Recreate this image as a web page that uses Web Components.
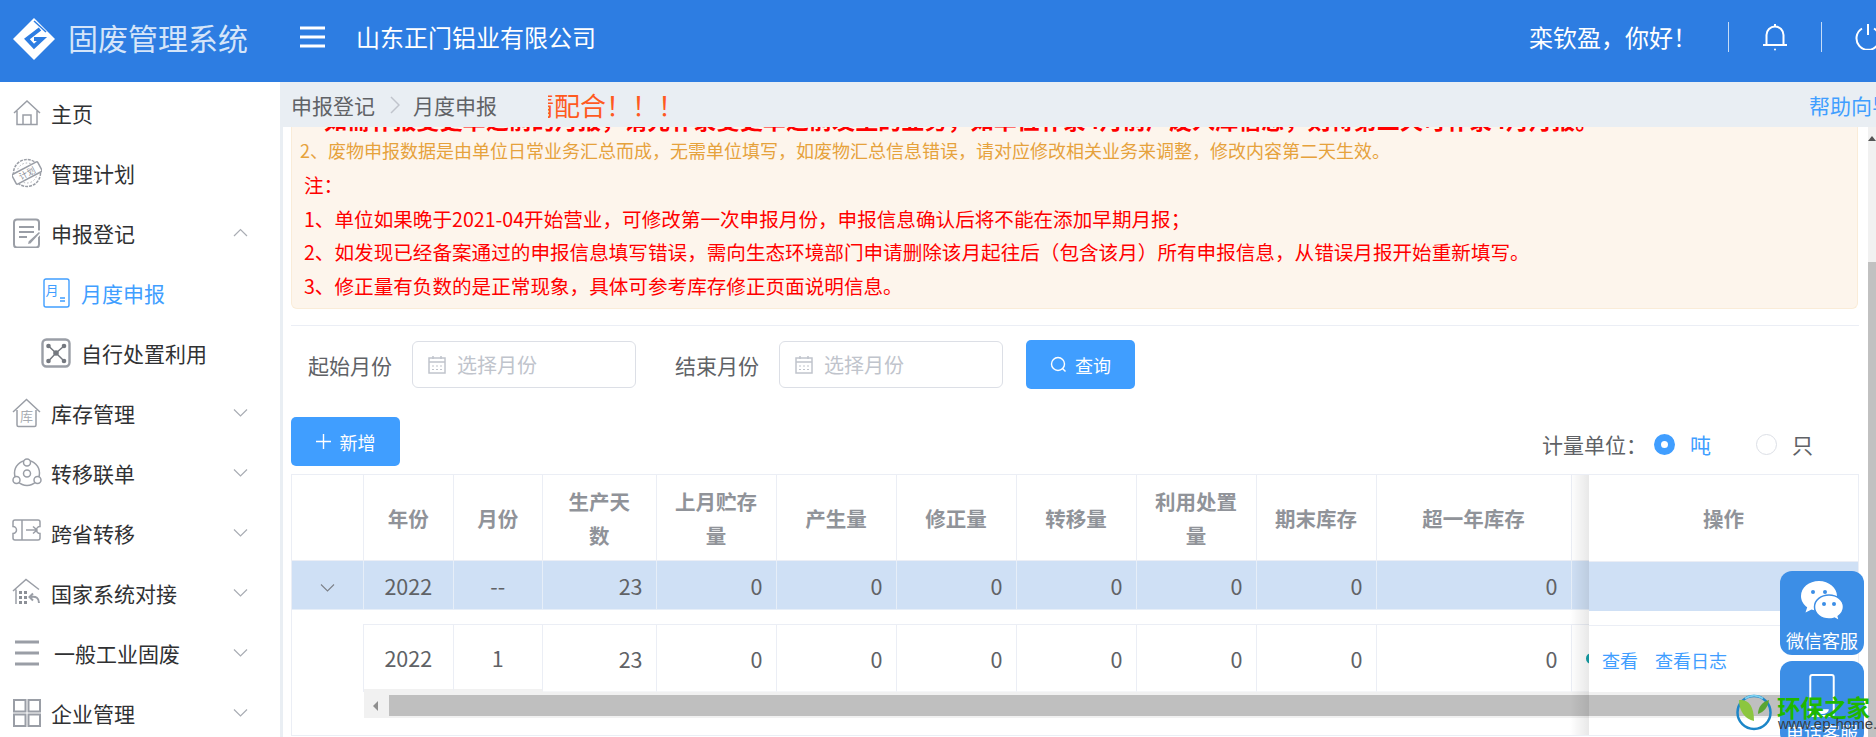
<!DOCTYPE html>
<html lang="zh-CN">
<head>
<meta charset="utf-8">
<title>固废管理系统</title>
<style>
  html, body { margin: 0; height: 100%; overflow: hidden; background: #fff; }
  body {
    display: flex;
    flex-direction: column;
    position: relative;
    font-family: "Noto Sans CJK SC", "Liberation Sans", sans-serif;
  }
  .layout { flex: 1; display: flex; min-height: 0; }
</style>
</head>
<body>
  <app-header company="山东正门铝业有限公司" greeting="栾钦盈，你好！"></app-header>
  <div class="layout">
    <side-nav>
      <nav-item icon="home">主页</nav-item>
      <nav-item icon="stamp">管理计划</nav-item>
      <nav-item icon="doc" arrow="up">申报登记</nav-item>
      <nav-item icon="month" sub active>月度申报</nav-item>
      <nav-item icon="network" sub>自行处置利用</nav-item>
      <nav-item icon="store" arrow="down">库存管理</nav-item>
      <nav-item icon="circles" arrow="down">转移联单</nav-item>
      <nav-item icon="ticket" arrow="down">跨省转移</nav-item>
      <nav-item icon="gov" arrow="down">国家系统对接</nav-item>
      <nav-item icon="bars" arrow="down" shift>一般工业固废</nav-item>
      <nav-item icon="grid" arrow="down">企业管理</nav-item>
    </side-nav>
    <main-panel>
      <notice-box></notice-box>
      <filter-bar></filter-bar>
      <table-tools></table-tools>
      <report-table></report-table>
    </main-panel>
  </div>
  <float-service></float-service>
  <ep-mark></ep-mark>

<script>
// sidebar icons, all on a 30 box
const ICONS = {
  home: `<path d="M2 15 15 3l13 12M5 13v13.500h20V13M11 26.500V17h8v9.500"/>`,
  stamp: `<circle cx="15" cy="15" r="13.500" stroke-dasharray="3 1"/><circle cx="15" cy="15" r="10" stroke-width=".8" stroke-dasharray="1.500 2"/>
    <g transform="rotate(-28 15 15)"><rect x="0.500" y="9.500" width="29" height="11" rx="1.500" fill="#fff"/>
    <text x="15" y="18.500" font-size="8.500" text-anchor="middle" fill="#8c9097" stroke="none">计划</text></g>`,
  doc: `<rect x="2" y="1.500" width="25" height="28" rx="3" stroke-width="2"/><path d="M7 9h15M7 14h15M7 19h8" stroke-width="2"/><path d="M15 27l1-4 11-10 2 2-10 11z" fill="#9a9ea6" stroke="#fff"/>`,
  month: `<rect x="3" y="1" width="25" height="28" rx="2" stroke="#409eff" stroke-width="1.400"/>
    <text x="11" y="17" font-size="13" text-anchor="middle" fill="#409eff" stroke="none">月</text>
    <path d="M19 20h5M19 23h5" stroke="#409eff"/>`,
  network: `<rect x="1.500" y="1.500" width="27" height="27" rx="4" stroke-width="2.400"/>
    <path d="M7.500 8 15 15 23 8M7.500 23 15 15 23 23" stroke="#74787f" stroke-width="1.500"/>
    <g fill="#74787f" stroke="none"><circle cx="7.500" cy="8" r="2.300"/><circle cx="23" cy="8" r="2.300"/><circle cx="7.500" cy="23" r="2.300"/><circle cx="23" cy="23" r="2.300"/><circle cx="15" cy="15" r="2.800"/></g>`,
  store: `<path d="M1 14 14.500 1.500 28 14M5 12v15a1.500 1.500 0 0 0 1.500 1.500h16a1.500 1.500 0 0 0 1.500-1.500V12"/>
    <text x="14.500" y="23" font-size="13" text-anchor="middle" fill="#a8acb2" stroke="none">库</text>`,
  circles: `<circle cx="15" cy="15" r="12.500"/><circle cx="15" cy="15.500" r="3.500"/>
    <g fill="#fff"><circle cx="15" cy="4.500" r="3.500"/><circle cx="4.500" cy="22" r="3.500"/><circle cx="25.500" cy="22" r="3.500"/></g>`,
  ticket: `<path d="M3 2h23a2 2 0 0 1 2 2v4.500a3.500 3.500 0 0 0 0 7V20a2 2 0 0 1-2 2H3a2 2 0 0 1-2-2v-4.500a3.500 3.500 0 0 0 0-7V4a2 2 0 0 1 2-2zM10 2v20M14 12h11M21 8.500l4 3.500-4 3.500"/>`,
  gov: `<path d="M1 13 14 1.500l13 10M4 26V11.500"/>
    <g fill="#8c9097" stroke="none"><rect x="7" y="13" width="3" height="3"/><rect x="12" y="13" width="3" height="3"/><rect x="7" y="18" width="3" height="3"/><rect x="12" y="18" width="3" height="3"/><rect x="7" y="23" width="3" height="3"/><rect x="12" y="23" width="3" height="3"/></g>
    <path d="M27 25c0-5-3-7-8-6M21 15.500l-3.500 3.500 3.500 3.500" stroke-width="2"/>`,
  bars: `<path d="M3 4h24M3 15h24M3 26h24" stroke-width="3"/>`,
  grid: `<g stroke-width="2"><rect x="2" y="2" width="11.500" height="11.500"/><rect x="16.500" y="2" width="11.500" height="11.500"/><rect x="2" y="16.500" width="11.500" height="11.500"/><rect x="16.500" y="16.500" width="11.500" height="11.500"/></g>`
};

class AppHeader extends HTMLElement {
  constructor() {
    super();
    this.attachShadow({ mode: 'open' });
  }

  connectedCallback() {
    const company = this.getAttribute('company') || '';
    const greeting = this.getAttribute('greeting') || '';
    this.shadowRoot.innerHTML = `
      <style>
        :host { display: flex; align-items: center; height: 82px; flex: none; background: #2d7de2; color: #fff; overflow: hidden; }
        svg { display: block; flex: none; }
        .logo { margin: -5px 0 0 13px; }
        .title { margin: -8px 0 0 13px; width: 180px; font-size: 30px; line-height: 40px; color: #d5e5f9; white-space: nowrap; }
        .menu { margin: -8px 0 0 52px; }
        .company { margin: -8px 0 0 31px; font-size: 24px; line-height: 34px; white-space: nowrap; }
        .right { margin-left: auto; display: flex; align-items: center; height: 30px; margin-top: -8px; }
        .hello { font-size: 24px; line-height: 34px; white-space: nowrap; margin-right: 31px; margin-top: -1px; }
        .sep { width: 1px; height: 30px; background: #c5dcf7; }
        .bell { margin: 0 33px 0 33px; }
        .power { margin: 0 -5px 0 33px; }
      </style>
      <svg class="logo" width="42" height="42" viewBox="0 0 42 42">
        <path d="M21 0 42 21 21 42 0 21z" fill="#fff"/>
        <path d="M27 11 14 21 21 28.500 29 21H21" fill="none" stroke="#2d7de2" stroke-width="4"/>
        <path d="M21 3 33 14" stroke="#2d7de2" stroke-width="1.500"/>
      </svg>
      <div class="title">固废管理系统</div>
      <svg class="menu" width="25" height="22" viewBox="0 0 25 22"><path d="M0 2h25M0 11h25M0 20h25" stroke="#fff" stroke-width="3"/></svg>
      <div class="company">${company}</div>
      <div class="right">
        <div class="hello">${greeting}</div>
        <div class="sep"></div>
        <svg class="bell" width="26" height="28" viewBox="0 0 26 28" fill="none" stroke="#fff" stroke-width="2">
          <path d="M1 22h24M4.500 22V12a8.500 8.500 0 0 1 17 0v10M13 3V1"/><circle cx="13" cy="26.500" r="1" fill="#fff" stroke="none"/>
        </svg>
        <div class="sep"></div>
        <svg class="power" width="26" height="26" viewBox="0 0 26 26" fill="none" stroke="#fff" stroke-width="2">
          <path d="M7 4.500a11.500 11.500 0 1 0 12 0M13 0v11"/>
        </svg>
      </div>`;
  }
}

class SideNav extends HTMLElement {
  constructor() {
    super();
    this.attachShadow({ mode: 'open' });
    this.shadowRoot.innerHTML = `
      <style>
        :host { display: block; width: 280px; flex: none; padding-top: 1px; background: #fff; overflow: hidden; box-sizing: border-box; }
      </style>
      <slot></slot>`;
  }
}

class NavItem extends HTMLElement {
  constructor() {
    super();
    this.attachShadow({ mode: 'open' });
  }

  connectedCallback() {
    const arrow = this.getAttribute('arrow');
    const chevron = arrow === 'up' ? 'M1 8 7.500 1.500 14 8' : 'M1 1.500 7.500 8 14 1.500';
    this.shadowRoot.innerHTML = `
      <style>
        :host { display: flex; align-items: center; height: 60px; padding: 0 32px 0 12px; box-sizing: border-box; font-size: 21px; color: #303133; white-space: nowrap; }
        :host([sub]) { padding-left: 41px; }
        :host([active]) { color: #409eff; }
        :host([shift]) .label { margin-left: 3px; }
        .icon { width: 30px; height: 30px; flex: none; margin-right: 9px; fill: none; stroke: #9a9ea6; stroke-width: 1.500; }
        :host([sub]) .icon { margin-right: 10px; }
        text { font-family: "Noto Sans CJK SC", sans-serif; }
        .arrow { margin: -1px 0 0 auto; fill: none; stroke: #a9adb4; stroke-width: 1.200; }
      </style>
      <svg class="icon" viewBox="0 0 30 30">${ICONS[this.getAttribute('icon')] || ''}</svg>
      <span class="label"><slot></slot></span>
      ${arrow ? `<svg class="arrow" width="15" height="10" viewBox="0 0 15 10"><path d="${chevron}"/></svg>` : ''}`;
  }
}

class MainPanel extends HTMLElement {
  constructor() {
    super();
    this.attachShadow({ mode: 'open' });
    this.shadowRoot.innerHTML = `
      <style>
        :host { display: flex; flex-direction: column; flex: 1; min-width: 0; background: #e9eef3; }
        .crumbs { height: 45px; flex: none; display: flex; align-items: center; background: #e9eef3; font-size: 21px; color: #606266; white-space: nowrap; position: relative; z-index: 1; }
        .first { margin-left: 11px; }
        .gt { margin: 0 13px 0 15px; fill: none; stroke: #c0c4cc; stroke-width: 1.500; }
        .ticker { margin-left: 51px; width: 124px; overflow: hidden; color: #ff5a1f; font-size: 26px; line-height: 36px; }
        .ticker span { display: block; margin-left: -20px; }
        .help { margin-left: auto; margin-right: -17px; color: #409eff; }
        .body { flex: 1; min-height: 0; display: flex; background: #fff; margin-left: 3px; }
        .page { flex: 1; min-width: 0; padding: 0 9px 0 8px; overflow: hidden; }
        .bar { width: 8px; flex: none; display: flex; flex-direction: column; background: #f1f1f1; }
        .bar i { display: block; width: 0; height: 0; margin: 9px 0 0 0; border: 4px solid transparent; border-top: 0; border-bottom: 5px solid #555; }
        .bar b { display: block; margin-top: 121px; flex: 1; background: #c1c1c1; }
      </style>
      <div class="crumbs">
        <span class="first">申报登记</span>
        <svg class="gt" width="10" height="18" viewBox="0 0 10 18"><path d="M1 1l8 8-8 8"/></svg>
        <span>月度申报</span>
        <div class="ticker"><span>请配合！！！</span></div>
        <span class="help">帮助向导</span>
      </div>
      <div class="body">
        <div class="page"><slot></slot></div>
        <div class="bar"><i></i><b></b></div>
      </div>`;
  }
}

class NoticeBox extends HTMLElement {
  constructor() {
    super();
    this.attachShadow({ mode: 'open' });
    this.shadowRoot.innerHTML = `
      <style>
        :host { display: block; margin: -23px 1px 0 0; padding: 0 8px 6px; background: #fdf5ec; border: 1px solid #faecd8; border-top: 0; border-radius: 0 0 6px 6px; font-size: 18px; white-space: nowrap; }
        p { margin: 0; }
        .top { height: 30px; line-height: 30px; padding-left: 24px; font-size: 23.100px; font-weight: 700; color: #f00; }
        .warn { height: 32px; line-height: 32px; color: #e6a23c; margin-bottom: 2px; }
        .red { height: 33.500px; line-height: 33.500px; padding-left: 4px; font-size: 19.600px; color: #f00; }
      </style>
      <p class="top">如需补报变更单之前的月报，请先补录变更单之前发生的业务，如单位补录4月前产废入库信息，则待第二天可补录4月月报。</p>
      <p class="warn">2、废物申报数据是由单位日常业务汇总而成，无需单位填写，如废物汇总信息错误，请对应修改相关业务来调整，修改内容第二天生效。</p>
      <p class="red">注：</p>
      <p class="red">1、单位如果晚于2021-04开始营业，可修改第一次申报月份，申报信息确认后将不能在添加早期月报；</p>
      <p class="red">2、如发现已经备案通过的申报信息填写错误，需向生态环境部门申请删除该月起往后（包含该月）所有申报信息，从错误月报开始重新填写。</p>
      <p class="red">3、修正量有负数的是正常现象，具体可参考库存修正页面说明信息。</p>`;
  }
}

class FilterBar extends HTMLElement {
  constructor() {
    super();
    this.attachShadow({ mode: 'open' });
    const field = label => `
      <span class="lbl">${label}</span>
      <div class="input">
        <svg width="18" height="18" viewBox="0 0 18 18" fill="none" stroke="#c0c4cc" stroke-width="1.500">
          <rect x="1" y="2" width="16" height="15"/><path d="M1 6h16M5 0v3M13 0v3"/>
          <path d="M4 10h2M8 10h2M12 10h2M4 13.500h2M8 13.500h2M12 13.500h2" stroke-width="1.200"/>
        </svg>
        <span>选择月份</span>
      </div>`;
    this.shadowRoot.innerHTML = `
      <style>
        :host { display: flex; align-items: center; margin-top: 16px; padding: 14px 0 0 17px; border-top: 1px solid #ebeef5; height: 49px; font-size: 20px; color: #606266; white-space: nowrap; }
        .lbl { width: 84px; font-size: 21px; margin-right: 20px; }
        .input { width: 224px; height: 47px; box-sizing: border-box; margin-right: 39px; display: flex; align-items: center; gap: 11px; padding-left: 15px; border: 1px solid #dcdfe6; border-radius: 6px; color: #c0c4cc; }
        .btn { width: 109px; height: 49px; margin-left: -16px; display: flex; align-items: center; justify-content: center; gap: 8px; background: #409eff; border-radius: 5px; color: #fff; font-size: 18px; }
      </style>
      ${field('起始月份')}${field('结束月份')}
      <div class="btn">
        <svg width="17" height="17" viewBox="0 0 17 17" fill="none" stroke="#fff" stroke-width="1.400"><circle cx="8" cy="8" r="6.500"/><path d="M12.500 12.500 15.500 15.500"/></svg>
        <span>查询</span>
      </div>`;
  }
}

class TableTools extends HTMLElement {
  constructor() {
    super();
    this.attachShadow({ mode: 'open' });
    this.shadowRoot.innerHTML = `
      <style>
        :host { display: flex; align-items: center; justify-content: space-between; height: 49px; margin-top: 28px; font-size: 21px; color: #606266; white-space: nowrap; }
        .add { width: 109px; height: 49px; display: flex; align-items: center; justify-content: center; gap: 9px; background: #409eff; border-radius: 5px; color: #fff; font-size: 18px; }
        .unit { display: flex; align-items: center; padding: 5px 46px 0 0; }
        .dot { width: 21px; height: 21px; box-sizing: border-box; border-radius: 50%; border: 1px solid #dcdfe6; margin-right: 15px; }
        .dot.on { border: 7px solid #409eff; background: #fff; }
        .name { width: 21px; }
        .on + .name { color: #409eff; margin-right: 45px; }
        .cap { margin-right: 7px; }
      </style>
      <div class="add">
        <svg width="15" height="15" viewBox="0 0 15 15"><path d="M7.500 0v15M0 7.500h15" stroke="#fff" stroke-width="1.400"/></svg>
        <span>新增</span>
      </div>
      <div class="unit">
        <span class="cap">计量单位：</span>
        <span class="dot on"></span><span class="name">吨</span>
        <span class="dot"></span><span class="name">只</span>
      </div>`;
  }
}

class ReportTable extends HTMLElement {
  constructor() {
    super();
    this.attachShadow({ mode: 'open' });
  }

  connectedCallback() {
    const heads = ['', '年份', '月份', '生产天<br>数', '上月贮存<br>量', '产生量', '修正量', '转移量', '利用处置<br>量', '期末库存', '超一年库存', ''];
    const nums = ['23', '0', '0', '0', '0', '0', '0', '0'];
    this.shadowRoot.innerHTML = `
      <style>
        :host { display: block; margin-top: 8px; width: 1568px; height: 262px; box-sizing: border-box; position: relative; overflow: hidden; border: 1px solid #ebeef5; border-width: 1px 0 1px 1px; font-size: 21.500px; color: #606266; white-space: nowrap; }
        .grid { display: grid; grid-template-columns: 72px 89.500px 89.500px 113.500px 120px 120px 120px 120px 120px 120px 195px 1fr; }
        .c { display: flex; align-items: center; justify-content: center; box-sizing: border-box; border-right: 1px solid #ebeef5; border-bottom: 1px solid #ebeef5; }
        .head { height: 86px; }
        .head .c { font-size: 20.500px; font-weight: 700; color: #909399; line-height: 34px; text-align: center; }
        .row { height: 49px; background: #cfe0f5; }
        .row .c { border-color: #e6eef8; }
        .num { justify-content: flex-end; padding-right: 13px; }
        .inner { margin-top: 14px; height: 68px; }
        .inner .c { border-top: 1px solid #ebeef5; border-bottom-color: #f5f6f8; }
        .inner .blank { border: 0; border-right: 1px solid #ebeef5; }
        .inner .low { border-bottom: 3px solid #f1f1f1; }
        .dotcell { justify-content: flex-start !important; padding: 0 0 0 14px !important; }
        .dotcell i { display: block; width: 11px; height: 11px; border-radius: 50%; background: #13a0a8; }
        .track { position: relative; z-index: 2; height: 26px; margin-left: 72px; box-sizing: border-box; padding-top: 3px; display: flex; background: #f1f1f1; }
        .track i { width: 25px; flex: none; display: flex; align-items: flex-start; }
        .track i::before { content: ""; margin: 6px 0 0 9px; border: 5px solid transparent; border-left: 0; border-right: 5px solid #8f8f8f; }
        .track b { flex: 1; height: 21px; background: #bfbfbf; }
        .fixed { position: absolute; z-index: 1; left: 1297px; right: 0; top: 0; bottom: 0; background: #fff; font-size: 18px; border-right: 1px solid #ebeef5; }
        .fixed div { box-sizing: border-box; }
        .f-head { height: 87px; display: flex; align-items: center; justify-content: center; font-size: 20.500px; font-weight: 700; color: #909399; border-bottom: 1px solid #ebeef5; }
        .f-row { height: 49px; background: #cfe0f5; }
        .f-act { margin-top: 14px; height: 68px; display: flex; align-items: center; gap: 17px; padding-left: 13px; color: #409eff; border-top: 1px solid #ebeef5; }
        .shade { position: absolute; z-index: 3; left: 1278px; width: 19px; top: 0; bottom: 0; background: linear-gradient(90deg, rgba(0,0,0,0), rgba(0,0,0,.09)); }
      </style>
      <div class="grid head">${heads.map(h => `<div class="c">${h}</div>`).join('')}</div>
      <div class="grid row">
        <div class="c"><svg width="15" height="10" viewBox="0 0 15 10" style="margin-top:6px"><path d="M1 1.500 7.500 8 14 1.500" fill="none" stroke="#7d8189" stroke-width="1.100"/></svg></div>
        <div class="c">2022</div><div class="c">--</div>
        ${nums.map(n => `<div class="c num">${n}</div>`).join('')}
        <div class="c"></div>
      </div>
      <div class="grid inner">
        <div class="c blank"></div>
        <div class="c low">2022</div><div class="c low">1</div>
        ${nums.map(n => `<div class="c num">${n}</div>`).join('')}
        <div class="c dotcell"><i></i></div>
      </div>
      <div class="track"><i></i><b></b></div>
      <div class="fixed">
        <div class="f-head">操作</div>
        <div class="f-row"></div>
        <div class="f-act"><span>查看</span><span>查看日志</span></div>
      </div>
      <div class="shade"></div>`;
  }
}

class FloatService extends HTMLElement {
  constructor() {
    super();
    this.attachShadow({ mode: 'open' });
    this.shadowRoot.innerHTML = `
      <style>
        :host { position: absolute; z-index: 5; right: 12px; top: 571px; width: 84px; display: flex; flex-direction: column; gap: 6px; font-size: 18px; color: #fff; white-space: nowrap; }
        .tile { height: 84px; box-sizing: border-box; padding-top: 9px; display: flex; flex-direction: column; align-items: center; background: #3c8ee6; border-radius: 12px; }
        .tile span { line-height: 26px; margin-top: 5px; }
        .phone { padding-top: 13px; }
        .phone span { margin-top: 2px; }
      </style>
      <div class="tile">
        <svg width="44" height="42" viewBox="0 0 44 42">
          <path d="M19 1C9 1 1 7.500 1 16c0 4.600 2.400 8.600 6.200 11.300L5.500 32.500l6-3c2.300.800 4.800 1.200 7.500 1.200 10 0 18-6.700 18-14.700S29 1 19 1z" fill="#fff"/>
          <circle cx="13" cy="12" r="2" fill="#3c8ee6"/><circle cx="25" cy="12" r="2" fill="#3c8ee6"/>
          <path d="M29 15c-8 0-14.500 5.200-14.500 12S21 39 29 39c1.900 0 3.700-.300 5.400-.900l5.100 2.900-1.300-4.700C41.200 34.100 43.500 30.800 43.500 27 43.500 20.200 37 15 29 15z" fill="#fff" stroke="#3c8ee6" stroke-width="1.500"/>
          <circle cx="24" cy="24" r="2" fill="#3c8ee6"/><circle cx="34" cy="24" r="2" fill="#3c8ee6"/>
        </svg>
        <span>微信客服</span>
      </div>
      <div class="tile phone">
        <svg width="26" height="44" viewBox="0 0 26 44">
          <rect x="1" y="1" width="24" height="42" rx="2" fill="none" stroke="#fff" stroke-width="2"/>
          <path d="M6 36h14a7 5 0 0 1-14 0z" fill="#fff"/>
        </svg>
        <span>电话客服</span>
      </div>`;
  }
}

class EpMark extends HTMLElement {
  constructor() {
    super();
    this.attachShadow({ mode: 'open' });
    this.shadowRoot.innerHTML = `
      <style>
        :host { position: absolute; z-index: 6; left: 1736px; top: 696px; display: flex; gap: 5px; white-space: nowrap; }
        svg { margin-top: -2px; }
        .txt { display: flex; flex-direction: column; }
        .cn { font-size: 23.500px; line-height: 22px; margin-bottom: -3px; font-weight: 700; color: #1fb800; letter-spacing: -.300px; }
        .en { font-family: "Liberation Sans", sans-serif; font-size: 15px; line-height: 17px; color: #3a3f44; margin-left: 1px; }
      </style>
      <svg width="36" height="37" viewBox="0 0 36 37">
        <circle cx="18" cy="18.500" r="16.500" fill="none" stroke="#1c86c8" stroke-width="2.500"/>
        <path d="M9 4.500a16.500 16.500 0 0 1 18 0" fill="none" stroke="#7fd0ee" stroke-width="2"/>
        <path d="M3 6c9-1 15 5 15 21C9 25 3 17 3 6z" fill="#8cc63f"/>
        <path d="M33 6c-1 7-5 12-11 14 0-7 4-12 11-14z" fill="#5aa532"/>
      </svg>
      <div class="txt"><span class="cn">环保之家</span><span class="en">www.ep-home.cn</span></div>`;
  }
}

customElements.define('app-header', AppHeader);
customElements.define('side-nav', SideNav);
customElements.define('nav-item', NavItem);
customElements.define('main-panel', MainPanel);
customElements.define('notice-box', NoticeBox);
customElements.define('filter-bar', FilterBar);
customElements.define('table-tools', TableTools);
customElements.define('report-table', ReportTable);
customElements.define('float-service', FloatService);
customElements.define('ep-mark', EpMark);
</script>
</body>
</html>
